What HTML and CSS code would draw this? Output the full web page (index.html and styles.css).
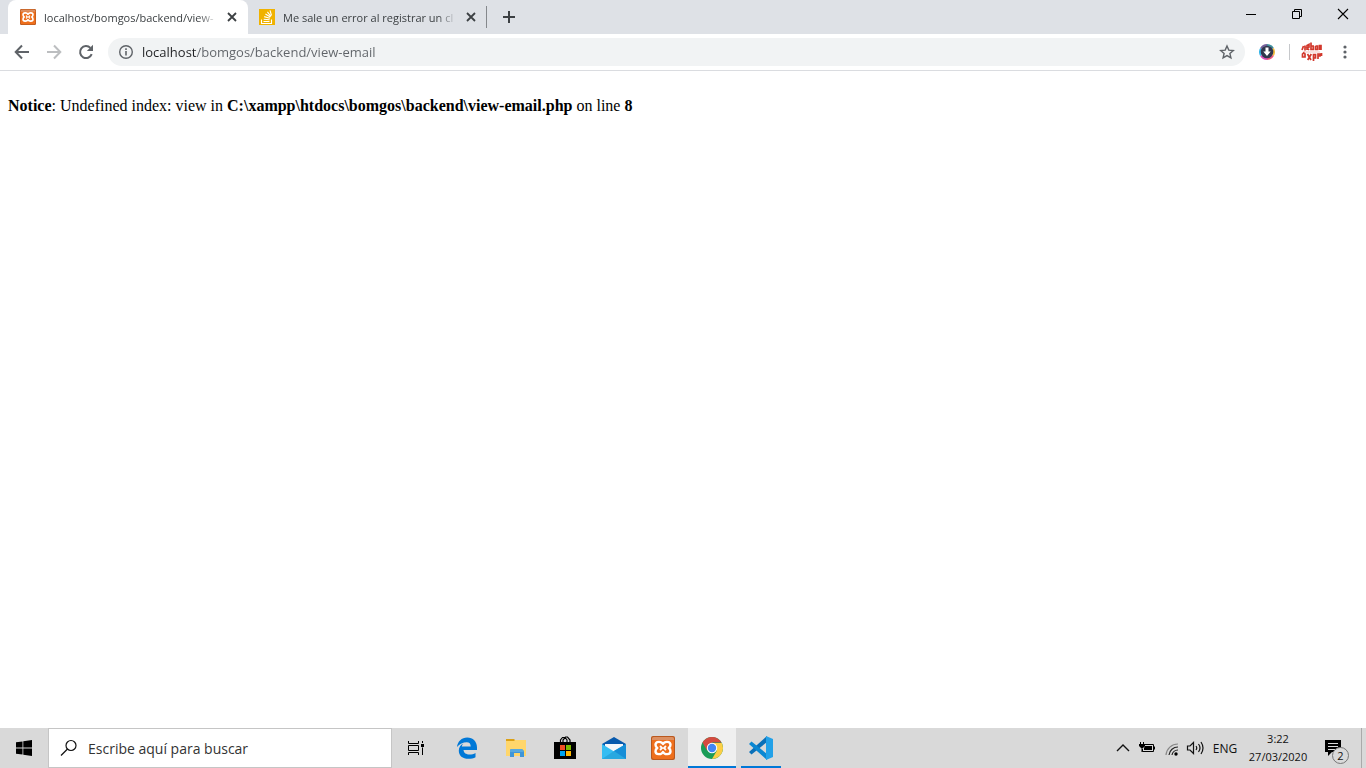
FILE: index.html
```html
<!DOCTYPE html>
<html lang="es">
<head>
<meta charset="utf-8">
<title>localhost/bomgos/backend/view-email</title>
<link rel="stylesheet" href="styles.css">
</head>
<body>
<svg class="defs" aria-hidden="true">
  <symbol id="close" viewBox="0 0 16 16"><path d="M4 4l8 8M12 4l-8 8" fill="none" stroke="#3c4043" stroke-width="1.8"/></symbol>
  <symbol id="xampp" viewBox="0 0 24 24">
    <rect width="24" height="24" rx="2" fill="#b9581f"/>
    <rect x="1" y="1" width="22" height="22" rx="2" fill="#ee6f1c"/>
    <path d="M1 3a2 2 0 0 1 2-2h18a2 2 0 0 1 2 2v1H1z" fill="#dc9062"/>
    <path d="M12 8C10.500 5 4.500 5 4.500 8.800c0 1.500.8 2.500 1.800 3.200-1 .7-1.800 1.700-1.800 3.200 0 3.800 6 3.800 7.500.8 1.500 3 7.500 3 7.500-.8 0-1.500-.8-2.500-1.800-3.200 1-.7 1.800-1.700 1.800-3.200C19.500 5 13.500 5 12 8z" fill="none" stroke="#fff" stroke-width="2.400" stroke-linejoin="round"/>
    <path d="M9.500 10.500L11 12l-1.500 1.500M14.500 10.500L13 12l1.500 1.500" stroke="#fff" stroke-width="1.800" stroke-linecap="round" fill="none"/>
  </symbol>
</svg>

<header class="browser">
  <div class="tabstrip">
    <div class="tab tab-active">
      <svg class="favicon"><use href="#xampp"/></svg>
      <button class="tab-title" type="button">localhost/bomgos/backend/view-</button>
      <button class="tab-close" type="button" aria-label="Cerrar pestaña"><svg width="16" height="16"><use href="#close"/></svg></button>
    </div>
    <div class="tab">
      <svg class="favicon" viewBox="0 0 16 16"><rect width="16" height="16" fill="#f0b200"/><path d="M2.500 10.500v4h10v-4M4.500 12.500h6M4.700 10.200l5.900.6M5.200 7.600l5.700 1.700M6.400 5l5 3M8.400 2.800l3.500 4.500M11 1.300l1.500 5.200" fill="none" stroke="#fff" stroke-width="1.100"/></svg>
      <button class="tab-title" type="button">Me sale un error al registrar un cl</button>
      <button class="tab-close" type="button" aria-label="Cerrar pestaña"><svg width="16" height="16"><use href="#close"/></svg></button>
    </div>
    <button class="new-tab" type="button" aria-label="Nueva pestaña"><svg width="14" height="14" viewBox="0 0 14 14"><path d="M7 1v12M1 7h12" stroke="#3c4043" stroke-width="2"/></svg></button>
    <div class="window-controls">
      <button type="button" aria-label="Minimizar"><svg width="12" height="12" viewBox="0 0 12 12"><path d="M1 6.500h10" stroke="#000"/></svg></button>
      <button type="button" aria-label="Restaurar"><svg width="12" height="12" viewBox="0 0 12 12"><path d="M1.500 3.500h7v7h-7zM3.500 3.500v-2h7v7h-2" fill="none" stroke="#000"/></svg></button>
      <button type="button" aria-label="Cerrar"><svg width="12" height="12" viewBox="0 0 12 12"><path d="M1 1l10 10M11 1L1 11" stroke="#000" stroke-width="1.100"/></svg></button>
    </div>
  </div>

  <div class="toolbar">
    <button class="nav" type="button" aria-label="Atrás"><svg width="16" height="16" viewBox="0 0 16 16"><path d="M15 8H2.500M8 1.500L1.700 8 8 14.500" fill="none" stroke="#5f6368" stroke-width="2"/></svg></button>
    <button class="nav" type="button" aria-label="Adelante"><svg width="16" height="16" viewBox="0 0 16 16"><path d="M1 8h12.500M8 1.500L14.300 8 8 14.500" fill="none" stroke="#bcbec0" stroke-width="2"/></svg></button>
    <button class="nav" type="button" aria-label="Recargar"><svg width="16" height="16" viewBox="0 0 16 16"><path d="M13.700 10.200A6 6 0 1 1 12.400 3.900" fill="none" stroke="#5f6368" stroke-width="2"/><path d="M15 .8V7H8.800z" fill="#5f6368"/></svg></button>
    <div class="omnibox">
      <svg width="16" height="16" viewBox="0 0 16 16"><circle cx="8" cy="8" r="6.300" fill="none" stroke="#5f6368" stroke-width="1.400"/><path d="M8 7v4.500M8 4.300V6" stroke="#5f6368" stroke-width="1.600"/></svg>
      <input class="url" type="text" aria-label="Dirección" value="localhost/bomgos/backend/view-email">
      <button type="button" aria-label="Favoritos"><svg width="16" height="16" viewBox="0 0 16 16"><path d="M8 2l1.800 4.100 4.500.4-3.400 3 1 4.400L8 11.600l-3.900 2.300 1-4.400-3.400-3 4.500-.4z" fill="none" stroke="#5f6368" stroke-width="1.400"/></svg></button>
    </div>
    <button class="extension" type="button" aria-label="Descargas"><svg width="16" height="16" viewBox="0 0 16 16"><g fill="none" stroke-width="2"><path d="M8 1a7 7 0 0 1 6 3.500" stroke="#3f8f9c"/><path d="M14 4.500A7 7 0 0 1 14 11.500" stroke="#f3bd3e"/><path d="M14 11.500A7 7 0 0 1 8 15" stroke="#ed557d"/><path d="M8 15a7 7 0 0 1-6-3.500" stroke="#d94dba"/><path d="M2 11.500a7 7 0 0 1 0-7" stroke="#35b5e8"/><path d="M2 4.500A7 7 0 0 1 8 1" stroke="#75609c"/></g><circle cx="8" cy="8" r="6.300" fill="#30364e"/><path d="M6.500 3.500h3v4h2.200L8 12 4.300 7.500h2.200z" fill="#fff"/></svg></button>
    <span class="divider"></span>
    <button class="profile" type="button" aria-label="Perfil"><svg width="22" height="22" viewBox="0 0 22 22"><g fill="none" stroke="#d2382c" stroke-width="1.700"><path d="M2.500 5L1 9M4 9.500V4.500M6 9V4.500l2-1v2.500l-2 .5 2 2.500M10 1.500v7h2.200V5H10M14.500 5h2v3.500h-2V5M18.500 9V4.500H20V9M3 11.500l-1.500 1.500v3H4v-3zM6.500 13l3.500 6M10.300 13l-3.600 6M12.500 20v-6.500h2v3.500h-2M17 18v-5h2v2h-2M20.500 12v3"/></g><path d="M3 11h16" stroke="#f3c6c1"/></svg></button>
    <button class="menu" type="button" aria-label="Menú"><svg width="16" height="16" viewBox="0 0 16 16" fill="#5f6368"><circle cx="8" cy="3" r="1.600"/><circle cx="8" cy="8" r="1.600"/><circle cx="8" cy="13" r="1.600"/></svg></button>
  </div>
</header>

<main class="page">
  <p><b>Notice</b>: Undefined index: view in <b>C:\xampp\htdocs\bomgos\backend\view-email.php</b> on line <b>8</b></p>
</main>

<footer class="taskbar">
  <button class="start" type="button" aria-label="Inicio"><svg width="16" height="16" viewBox="0 0 16 16"><path d="M0 2.300L6.500 1.400v6.100H0zM7.300 1.300L16 0v7.500H7.300zM0 8.400h6.500v6.200L0 13.700zM7.300 8.400H16V16l-8.700-1.200z"/></svg></button>
  <label class="search">
    <svg width="18" height="18" viewBox="0 0 18 18"><circle cx="11" cy="6.500" r="5" fill="none" stroke="#111" stroke-width="1.200"/><path d="M7.500 10L1 16.500" stroke="#111" stroke-width="1.200"/></svg>
    <input type="text" placeholder="Escribe aquí para buscar" aria-label="Buscar">
  </label>
  <div class="apps">
    <button class="app task-view" type="button" aria-label="Vista de tareas"><svg width="18" height="16" viewBox="0 0 18 16"><path d="M1.500 1v2.500h10V1M1.500 15v-2.500h10V15M1.500 5.500h10v5h-10zM15.500 1v2M15.500 7.500V15" fill="none" stroke="#000"/><path d="M14 4h3v3h-3z"/></svg></button>
    <button class="app" type="button" aria-label="Edge"><svg width="24" height="24" viewBox="0 0 24 24"><path d="M2 11C2.600 5.400 6.700 1.500 12.200 1.500 18 1.500 22 5.500 22 11.500V14H8.500c.2 3 2.700 4.500 6 4.500 2.300 0 4.300-.6 6-1.600v4.400c-1.800 1-4.300 1.500-7 1.500-6 0-9.700-3.200-9.700-8.100 0-3.200 1.600-5.600 4.600-7.200-1 1-1.400 1.900-1.600 3h8.900c0-2.800-1.300-4.300-3.900-4.300C8 6.200 4.500 8 2 11z" fill="#0078d7"/></svg></button>
    <button class="app" type="button" aria-label="Explorador"><svg width="24" height="24" viewBox="0 0 24 24"><path d="M2 3h8l2 2h10v3H2z" fill="#dca115"/><path d="M2 5h8l1-1h11v16H2z" fill="#ffd66b"/><path d="M6 21v-7l1-1h11l2 2v6h-4v-4h-6v4z" fill="#3f96d8"/><path d="M6 14l1-1h11l2 3H6z" fill="#58a9df"/></svg></button>
    <button class="app" type="button" aria-label="Tienda"><svg width="24" height="24" viewBox="0 0 24 24"><path d="M1 6h22v17H1z"/><path d="M7.500 6V4l2-2.500h2.500L14 4v2M10 6V4l2.500-3h2L17 4v2" fill="none" stroke="#000" stroke-width="1.200"/><path d="M7 9h5v5H7z" fill="#f04e23"/><path d="M13 9h5v5h-5z" fill="#7eba00"/><path d="M7 15h5v5H7z" fill="#00a4ef"/><path d="M13 15h5v5h-5z" fill="#ffb900"/></svg></button>
    <button class="app" type="button" aria-label="Correo"><svg width="24" height="24" viewBox="0 0 24 24"><path d="M0 8L12 1l12 7v5H0z" fill="#0759ad"/><path d="M3 8h18v4l-9 4-9-4z" fill="#f5f7fa"/><path d="M0 8l24 15H0z" fill="#35bdf2"/><path d="M24 8v15H0l12-8z" fill="#28a8e0"/><path d="M24 8v15L12 15z" fill="#168ed7"/></svg></button>
    <button class="app" type="button" aria-label="XAMPP"><svg width="24" height="24"><use href="#xampp"/></svg></button>
    <button class="app app-active" type="button" aria-label="Chrome"><svg width="24" height="24" viewBox="0 0 24 24"><circle cx="12" cy="12" r="11" fill="#1a9c57"/><path d="M2.500 6.500A11 11 0 0 1 21.500 6.500H12L7.200 14.700z" fill="#d44a40"/><path d="M21.800 7A11 11 0 0 1 12 23l4.800-8.200L12 7z" fill="#fdce45"/><circle cx="12" cy="12" r="5.200" fill="#fff"/><circle cx="12" cy="12" r="4.200" fill="#4285f4"/></svg></button>
    <button class="app app-open" type="button" aria-label="Visual Studio Code"><svg width="24" height="24" viewBox="0 0 24 24"><path d="M0 16l2.500 2.500L18 6V0z" fill="#0a70b8"/><path d="M0 8l2.500-2.500L18 18v6z" fill="#0a87d2"/><path d="M17 0l7 3v18l-7 3z" fill="#22a1e8"/></svg></button>
  </div>
  <div class="tray">
    <button class="tray-icon" type="button" aria-label="Mostrar iconos"><svg width="14" height="16" viewBox="0 0 14 16"><path d="M1 11l6-6 6 6" fill="none" stroke="#111" stroke-width="1.400"/></svg></button>
    <button class="tray-icon" type="button" aria-label="Batería"><svg width="18" height="16" viewBox="0 0 18 16"><path d="M6 4.500h9.500v7H4.500V9M16.500 6.500v3" fill="none" stroke="#000"/><path d="M7 6h7v4H6V8zM1 4h6v2L5 8H3L1 6zM2 2h1v2H2zM5 2h1v2H5z"/><path d="M4 8v4" stroke="#000"/></svg></button>
    <button class="tray-icon" type="button" aria-label="Wi-Fi"><svg width="16" height="16" viewBox="0 0 16 16"><g fill="none" stroke-width="1.200"><path d="M3 15A12 12 0 0 1 15 4" stroke="#888"/><path d="M6 15a9 9 0 0 1 9-8M9 15a6 6 0 0 1 6-5" stroke="#222"/></g><circle cx="13" cy="14" r="1.700"/></svg></button>
    <button class="tray-icon" type="button" aria-label="Volumen"><svg width="18" height="16" viewBox="0 0 18 16"><path d="M1.500 6v4H4l3.500 3.500v-11L4 6zM10 6q1.500 2 0 4M12.500 4q3 4 0 8M15 2q4 6 0 12" fill="none" stroke="#111" stroke-width="1.200"/></svg></button>
    <button class="language" type="button">ENG</button>
    <button class="clock" type="button"><span>3:22</span><span>27/03/2020</span></button>
    <button class="notifications" type="button" aria-label="Notificaciones"><svg width="18" height="18" viewBox="0 0 18 18"><path d="M1 1h16v12H8l-4 4v-4H1z"/><path d="M4 4.500h10M4 7.500h10M4 10.500h7" stroke="#dadada"/></svg><span class="badge">2</span></button>
    <span class="show-desktop"></span>
  </div>
</footer>
</body>
</html>
```
FILE: styles.css
```css
* { box-sizing: border-box; }

body {
  margin: 0;
  min-height: 100vh;
  display: flex;
  flex-direction: column;
  background: #fff;
  font-family: "Open Sans", "Noto Sans", sans-serif;
  font-size: 11px;
}

button, input {
  margin: 0;
  padding: 0;
  border: 0;
  background: none;
  color: inherit;
  font: inherit;
}

button { display: flex; align-items: center; justify-content: center; }
input:focus { outline: none; }
svg { display: block; flex: none; }
.defs { position: absolute; width: 0; height: 0; }

.tabstrip {
  display: flex;
  height: 34px;
  padding-left: 8px;
  background: #dee1e6;
}

.tab {
  display: flex;
  align-items: center;
  width: 240px;
  padding: 0 8px 0 12px;
  color: #3c4043;
}

.tab + .tab {
  width: 239px;
  padding: 0 7px 0 11px;
  border-right: 1px solid #85888c;
  border-image: linear-gradient(transparent 7px, #85888c 7px, #85888c 27px, transparent 27px) 1;
}

.tab-active { border-radius: 8px 8px 0 0; background: #fff; }
.favicon { width: 16px; height: 16px; }

.tab-title {
  flex: 1;
  min-width: 0;
  margin-left: 8px;
  justify-content: flex-start;
  overflow: hidden;
  white-space: nowrap;
  mask-image: linear-gradient(to left, transparent, #000 20px);
}

.tab-close { width: 16px; height: 16px; margin-left: 6px; }
.new-tab { width: 44px; }
.window-controls { display: flex; margin-left: auto; }
.window-controls button { width: 46px; height: 28px; }

.toolbar {
  display: flex;
  align-items: center;
  height: 37px;
  padding: 0 6px;
  border-bottom: 1px solid #dadce0;
}

.nav { width: 32px; height: 28px; }

.omnibox {
  flex: 1;
  display: flex;
  align-items: center;
  gap: 8px;
  height: 28px;
  margin-left: 6px;
  padding: 0 10px;
  border-radius: 14px;
  background: #f1f3f4;
}

.url {
  flex: 1;
  min-width: 0;
  height: 28px;
  font-size: 13px;
  color: transparent;
  caret-color: #202124;
  background: linear-gradient(to right, #202124 55px, #5f6368 55px);
  background-clip: text;
}

.extension { width: 16px; margin-left: 14px; }
.divider { width: 1px; height: 16px; margin-left: 14px; background: #c6c8cb; }
.profile { margin-left: 11px; }
.menu { width: 32px; margin-left: 6px; }
.toolbar .menu { margin-right: -1px; }

.page {
  flex: 1;
  padding: 26px 8px;
  font-family: "Liberation Serif", "Times New Roman", serif;
  font-size: 16px;
  line-height: 18px;
  color: #000;
}

.page p { margin: 0; }

.taskbar {
  display: flex;
  height: 40px;
  background: #d9d9d9;
  color: #111;
}

.start { width: 48px; }

.search {
  display: flex;
  align-items: center;
  gap: 10px;
  width: 344px;
  padding-left: 11px;
  border: 1px solid #c5c5c5;
  background: #fff;
}

.search input { flex: 1; min-width: 0; font-size: 14px; }
.search input::placeholder { color: #333; opacity: 1; }

.apps { display: flex; gap: 1px; }
.app { width: 48px; border-top: 2px solid transparent; border-bottom: 2px solid transparent; }
.task-view { margin-right: 2px; }
.app-active { background: #efefef; border-top-color: #efefef; border-bottom-color: #0078d7; }
.app-open { border-image: linear-gradient(to right, transparent 4px, #0078d7 4px, #0078d7 44px, transparent 44px) 0 0 2 0; }

.tray { display: flex; margin-left: auto; }
.tray-icon { width: 24px; }
.language { width: 34px; margin-left: 1px; font-size: 12px; }

.clock {
  flex-direction: column;
  width: 72px;
  line-height: 18px;
}

.notifications { position: relative; width: 38px; }

.badge {
  position: absolute;
  right: 3px;
  bottom: 4px;
  width: 17px;
  height: 17px;
  border: 1px solid #777;
  border-radius: 50%;
  background: #dadada;
  line-height: 15px;
}

.show-desktop { width: 5px; margin-left: 9px; border-left: 1px solid #aaa; }
```
